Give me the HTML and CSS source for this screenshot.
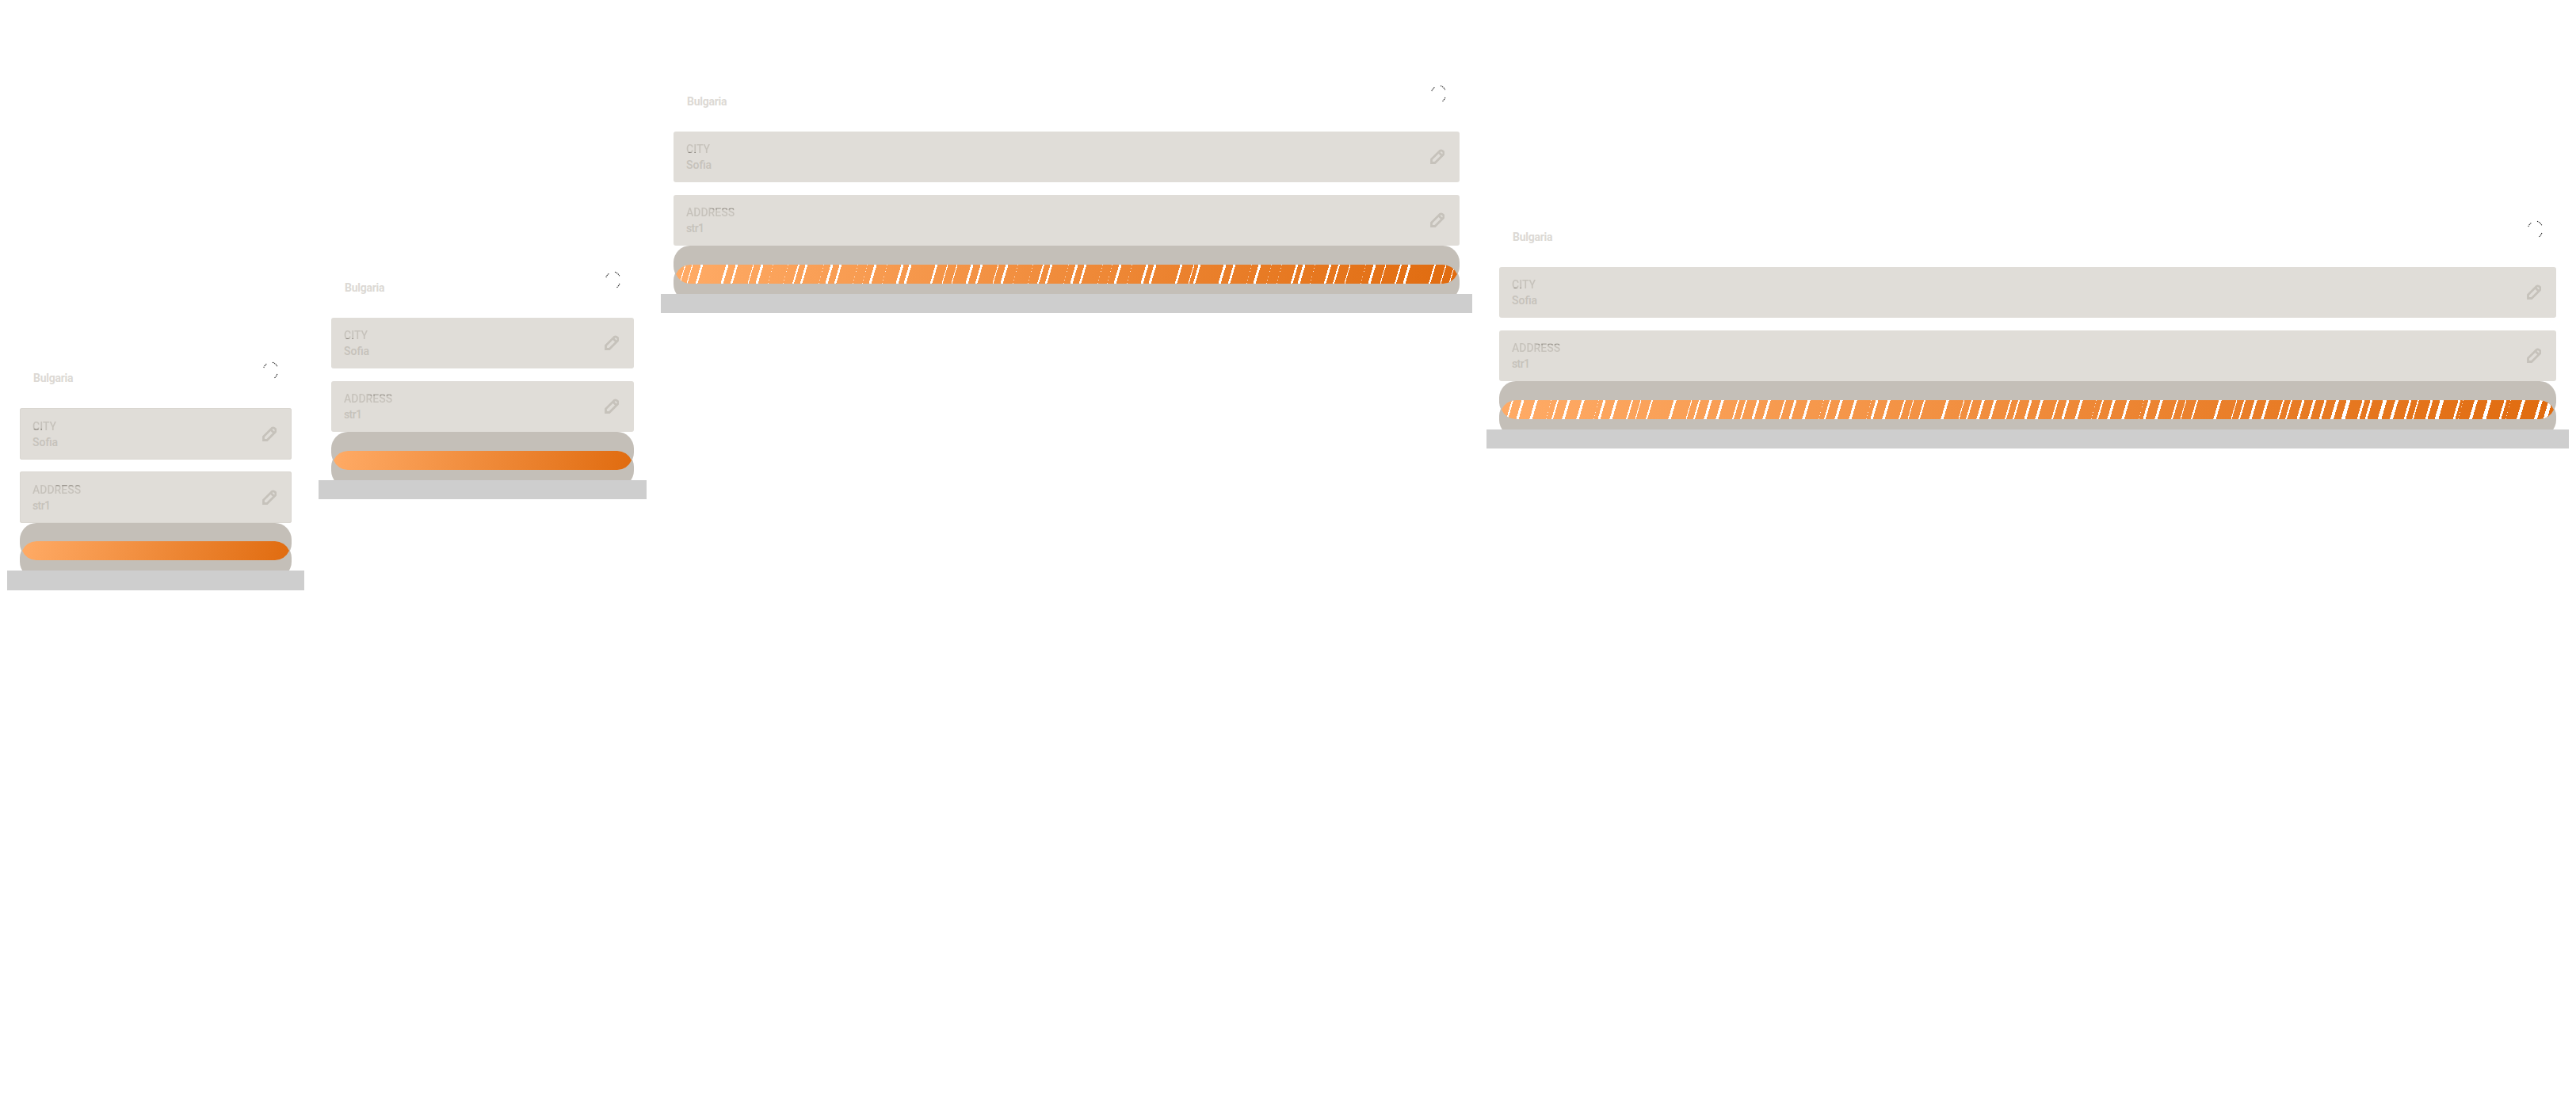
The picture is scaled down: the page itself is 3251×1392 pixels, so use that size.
FILE: index.html
```html
<!DOCTYPE html>
<html lang="en">
<head>
<meta charset="utf-8">
<title>Address previews</title>
<link rel="stylesheet" href="styles.css">
</head>
<body>
<svg class="defs" width="0" height="0" aria-hidden="true">
  <defs>
    <g id="spinner-arcs">
      <path d="M3.8 9A10 10 0 0 1 7.5 4.3M15 2.3A10 10 0 0 1 20.8 7.3M20.9 17A10 10 0 0 1 17.5 21.7"/>
    </g>
    <g id="pencil-shape">
      <path d="M1.5 17.5V13L11.8 2.7a3.2 3.2 0 0 1 4.5 4.5L6 17.5Z"/>
      <path d="M10.5 4l4.5 4.5"/>
    </g>
    <g id="wide-a">
      <path class="st3" d="M23 24l7-24M126 24l7-24M320 24l7-24"/>
      <path class="st4" d="M40 24l7-24M81 24l7-24M99 24l7-24M141 24l7-24M215 24l7-24M260 24l7-24M275 24l7-24M334 24l7-24"/>
      <path class="st2" d="M10 24l7-24M67 24l7-24M161 24l7-24M186 24l7-24M246 24l7-24M295 24l7-24M305 24l7-24"/>
      <path class="st1" d="M172 24l7-24M236 24l7-24"/>
      <path class="stdot" d="M59 24l7-24M119 24l7-24"/>
    </g>
  </defs>
</svg>

<main class="stage">
  <section class="card card-phone">
    <header class="head">
      <span class="title">Bulgaria</span>
      <svg class="spinner" viewBox="0 0 24 24"><use href="#spinner-arcs"/></svg>
    </header>
    <div class="rows">
      <div class="row">
        <div class="info"><span class="label label-city">CITY</span><span class="value">Sofia</span></div>
        <svg class="pencil" viewBox="0 0 18 20"><use href="#pencil-shape"/></svg>
      </div>
      <div class="row">
        <div class="info"><span class="label label-address">ADDRESS</span><span class="value value-tight">str1</span></div>
        <svg class="pencil" viewBox="0 0 18 20"><use href="#pencil-shape"/></svg>
      </div>
    </div>
    <div class="pill">
      <div class="lobe"></div>
      <div class="lobe lobe-low"></div>
      <div class="fill fill-343"></div>
    </div>
    <div class="base"></div>
  </section>

  <section class="card card-tablet">
    <header class="head">
      <span class="title">Bulgaria</span>
      <svg class="spinner" viewBox="0 0 24 24"><use href="#spinner-arcs"/></svg>
    </header>
    <div class="rows">
      <div class="row">
        <div class="info"><span class="label label-city">CITY</span><span class="value">Sofia</span></div>
        <svg class="pencil" viewBox="0 0 18 20"><use href="#pencil-shape"/></svg>
      </div>
      <div class="row">
        <div class="info"><span class="label label-address">ADDRESS</span><span class="value value-tight">str1</span></div>
        <svg class="pencil" viewBox="0 0 18 20"><use href="#pencil-shape"/></svg>
      </div>
    </div>
    <div class="pill">
      <div class="lobe"></div>
      <div class="lobe lobe-low"></div>
      <div class="fill fill-382"></div>
    </div>
    <div class="base"></div>
  </section>

  <section class="card card-laptop">
    <header class="head">
      <span class="title">Bulgaria</span>
      <svg class="spinner" viewBox="0 0 24 24"><use href="#spinner-arcs"/></svg>
    </header>
    <div class="rows">
      <div class="row">
        <div class="info"><span class="label label-city">CITY</span><span class="value">Sofia</span></div>
        <svg class="pencil" viewBox="0 0 18 20"><use href="#pencil-shape"/></svg>
      </div>
      <div class="row">
        <div class="info"><span class="label label-address">ADDRESS</span><span class="value value-tight">str1</span></div>
        <svg class="pencil" viewBox="0 0 18 20"><use href="#pencil-shape"/></svg>
      </div>
    </div>
    <div class="pill">
      <div class="lobe"></div>
      <div class="lobe lobe-low"></div>
      <div class="fill fill-992">
        <svg class="stripes" viewBox="-3 0 992 24">
          <path class="st3" d="M58 24l7-24M102 24l7-24M190 24l7-24M245 24l7-24M279 24l7-24M289 24l7-24M367 24l7-24M411 24l7-24M499 24l7-24M554 24l7-24M588 24l7-24M598 24l7-24M686 24l7-24M730 24l7-24M786 24l7-24M875 24l7-24M919 24l7-24"/>
          <path class="st25" d="M26 24l7-24M70 24l7-24M158 24l7-24M201 24l7-24M322 24l7-24M379 24l7-24M467 24l7-24M510 24l7-24M631 24l7-24M654 24l7-24M698 24l7-24M777 24l7-24M819 24l7-24"/>
          <path class="st2" d="M148 24l7-24M457 24l7-24M830 24l7-24M908 24l7-24M951 24l7-24"/>
          <path class="st1" d="M5 24l7-24M14 24l7-24M91 24l7-24M336 24l7-24M348 24l7-24M400 24l7-24M647 24l7-24M844 24l7-24M889 24l7-24M965 24l7-24M976 24l7-24"/>
          <path class="stdot" d="M116 24l7-24M135 24l7-24M180 24l7-24M223 24l7-24M235 24l7-24M260 24l7-24M425 24l7-24M444 24l7-24M489 24l7-24M532 24l7-24M544 24l7-24M569 24l7-24M720 24l7-24M745 24l7-24M758 24l7-24M800 24l7-24M864 24l7-24"/>
        </svg>
      </div>
    </div>
    <div class="base"></div>
  </section>

  <section class="card card-desktop">
    <header class="head">
      <span class="title">Bulgaria</span>
      <svg class="spinner" viewBox="0 0 24 24"><use href="#spinner-arcs"/></svg>
    </header>
    <div class="rows">
      <div class="row">
        <div class="info"><span class="label label-city">CITY</span><span class="value">Sofia</span></div>
        <svg class="pencil" viewBox="0 0 18 20"><use href="#pencil-shape"/></svg>
      </div>
      <div class="row">
        <div class="info"><span class="label label-address">ADDRESS</span><span class="value value-tight">str1</span></div>
        <svg class="pencil" viewBox="0 0 18 20"><use href="#pencil-shape"/></svg>
      </div>
    </div>
    <div class="pill">
      <div class="lobe"></div>
      <div class="lobe lobe-low"></div>
      <div class="fill fill-1334">
        <svg class="stripes stripes-wide" viewBox="0 0 1334 24">
          <use href="#wide-a"/>
          <use href="#wide-a" x="344"/>
          <use href="#wide-a" x="688"/>
          <path class="st2" d="M1036 24l7-24M1084 24l7-24M1094 24l7-24M1143 24l7-24M1170 24l7-24M1205 24l7-24M1263 24l7-24"/>
          <path class="st3" d="M1051 24l7-24M1126 24l7-24M1226 24l7-24M1286 24l7-24M1308 24l7-24"/>
          <path class="st4" d="M1065 24l7-24M1111 24l7-24M1183 24l7-24M1243 24l7-24M1320 24l7-24"/>
          <path class="st1" d="M1153 24l7-24"/>
          <path class="stdot" d="M1210 24l7-24M1270 24l7-24"/>
        </svg>
      </div>
    </div>
    <div class="base"></div>
  </section>
</main>
</body>
</html>
```

FILE: styles.css
```css
* {
  box-sizing: border-box;
}

html,
body {
  margin: 0;
  background: #fff;
}

.defs {
  position: absolute;
}

.stage {
  display: flex;
  align-items: flex-start;
  gap: 18px;
  padding-left: 9px;
  font-family: Roboto, "Liberation Sans", sans-serif;
}

.card {
  flex: none;
  padding: 0 16px;
}

.card-phone {
  width: 375px;
  margin-top: 451px;
}

.card-tablet {
  width: 414px;
  margin-top: 337px;
}

.card-laptop {
  width: 1024px;
  margin-top: 102px;
}

.card-desktop {
  width: 1366px;
  margin-top: 273px;
}

.head {
  display: flex;
  justify-content: space-between;
  align-items: flex-start;
  height: 64px;
  padding: 4px 15px 0 17px;
}

.title {
  margin-top: 12px;
  font-size: 14px;
  line-height: 20px;
  font-weight: 700;
  letter-spacing: -0.25px;
  color: #dcd9d4;
}

.spinner {
  width: 24px;
  height: 24px;
  fill: none;
  stroke: #222;
  stroke-width: 1.1;
  stroke-dasharray: 1.4 0.8;
}

.rows {
  display: flex;
  flex-direction: column;
  gap: 16px;
}

.row {
  display: flex;
  justify-content: space-between;
  align-items: center;
  height: 64px;
  padding: 0 19px 0 16px;
  border-radius: 3px;
  background: #e0ddd8;
}

.info {
  display: flex;
  flex-direction: column;
  font-size: 14px;
  line-height: 20px;
  font-weight: 500;
  color: #c6c2bb;
}

.value-tight {
  letter-spacing: -0.6px;
}

.label {
  width: fit-content;
  color: transparent;
  background-clip: text;
  -webkit-background-clip: text;
  background-repeat: no-repeat;
}

.label-city {
  background-image: linear-gradient(#8c8780, #8c8780), linear-gradient(#c6c2bb, #c6c2bb);
  background-size: 12px 1.5px, 100% 100%;
  background-position: 0 13.5px, 0 0;
}

.label-address {
  background-image: linear-gradient(#9a958e, #9a958e), linear-gradient(#c6c2bb, #c6c2bb);
  background-size: 30px 1.5px, 100% 100%;
  background-position: 30px 4.5px, 0 0;
}

.pencil {
  width: 18px;
  height: 20px;
  fill: none;
  stroke: #c6c2bb;
  stroke-width: 2.8;
}

.pill {
  position: relative;
  margin-bottom: -9px;
}

.lobe {
  height: 47px;
  border-radius: 21px;
  background: #c4bfb8;
}

.lobe-low {
  margin-top: -24px;
}

.fill {
  position: absolute;
  top: 24px;
  left: 0;
  width: 100%;
  height: 24px;
  background: linear-gradient(100deg, #ffab66, #e06b0f);
}

.fill-343 {
  clip-path: path("M21 0A20 20 0 0 0 3 12A20 20 0 0 0 21 24H322A20 20 0 0 0 340 12A20 20 0 0 0 322 0Z");
}

.fill-382 {
  clip-path: path("M21 0A20 20 0 0 0 3 12A20 20 0 0 0 21 24H361A20 20 0 0 0 379 12A20 20 0 0 0 361 0Z");
}

.fill-992 {
  clip-path: path("M21 0A20 20 0 0 0 3 12A20 20 0 0 0 21 24H971A20 20 0 0 0 989 12A20 20 0 0 0 971 0Z");
}

.fill-1334 {
  clip-path: path("M21 0A20 20 0 0 0 3 12A20 20 0 0 0 21 24H1313A20 20 0 0 0 1331 12A20 20 0 0 0 1313 0Z");
}

.stripes {
  display: block;
  width: 100%;
  height: 24px;
  fill: none;
  stroke: #fff;
  shape-rendering: crispEdges;
}

.st4 {
  stroke-width: 3.2;
}

.st3 {
  stroke-width: 3;
}

.st25 {
  stroke-width: 2.6;
}

.st2 {
  stroke-width: 2;
}

.st1 {
  stroke-width: 1.1;
}

.stdot {
  stroke-width: 0.9;
  stroke-dasharray: 1 3;
}

.stripes-wide .st4 {
  stroke-width: 4.6;
}

.stripes-wide .st3 {
  stroke-width: 3.8;
}

.stripes-wide .st2 {
  stroke-width: 2.8;
}

.stripes-wide .st1 {
  stroke-width: 1.6;
}

.base {
  position: relative;
  height: 24px;
  margin: 0 -16px;
  background: #cecece;
}

.card-phone .row {
  height: 65px;
  box-shadow: inset 0 0 0 1px #dad7d1;
}

.card-phone .rows {
  gap: 15px;
}

.card-phone .pill {
  margin-bottom: -10px;
}

.card-phone .fill {
  top: 23px;
}

.card-phone .base {
  height: 25px;
}
```
